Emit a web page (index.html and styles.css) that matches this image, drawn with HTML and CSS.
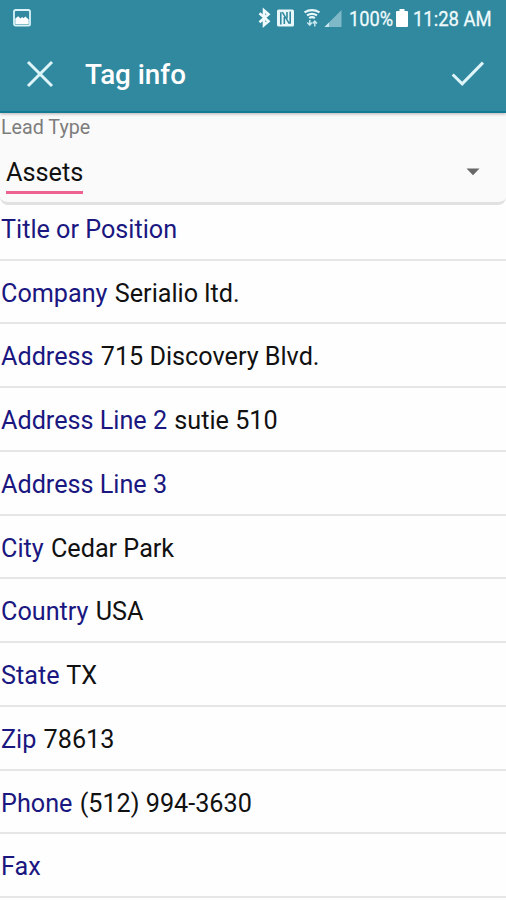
FILE: index.html
```html
<!DOCTYPE html>
<html lang="en">
<head>
<meta charset="utf-8">
<title>Tag info</title>
<link rel="stylesheet" href="styles.css">
</head>
<body>
<header class="header">
  <div class="status">
    <svg class="status-photo" width="18" height="18" viewBox="0 0 18 18"><rect x="1" y="1" width="16" height="15.5" rx="1.6" fill="none" stroke="#d9f3f8" stroke-width="1.8"/><path d="M2.3 15V9.6l2.9-2.4 2.3 2.3 1.6-1.6 1.6 1.3 1.6-1.6 3.4 3v4.4z" fill="#fff"/></svg>
    <svg class="status-icons" width="88" height="22" viewBox="0 0 88 22" fill="none">
      <path d="M1.5 6.3l9 8-4.5 3.9V3.3l4.5 3.9-9 8" stroke="#f1fbfd" stroke-width="2.6"/>
      <rect x="19" y="2.5" width="17" height="17" rx="1.6" fill="#e8f7fa"/>
      <path d="M22.8 17.5V5.2M24.3 5.2l7 11.5M26.3 17V10M32.2 4.5v12.3M29 11.5V5" stroke="#31899f" stroke-width="1.6"/>
      <path d="M46.5 5.4q7.5-4.6 15 0M49 8.4q5-3.2 10 0M51.2 11.2q2.8-2 5.6 0" stroke="#e8f7fa" stroke-width="2.2"/>
      <path d="M51.8 13v5M49.3 15.5l2.5 2.7 2-2.7M56.8 19.5v-5M54.6 16.6l2.2-2.5 2.2 2.5" stroke="#c6e8ef" stroke-width="1.5"/>
      <path d="M66.5 20L83.5 3v17z" fill="#7fb9c7"/><path d="M66.5 20l4.5-4.4V20z" fill="#c9e7ee"/>
    </svg>
    <span class="status-percent">100%</span>
    <svg class="status-battery" width="12" height="18" viewBox="0 0 12 18"><path d="M3.5 0h5v2H11q1 0 1 1V17q0 1-1 1H1q-1 0-1-1V3q0-1 1-1h2.5z" fill="#fff"/></svg>
    <span class="status-time">11:28 AM</span>
  </div>
  <div class="toolbar">
    <svg class="close" width="28" height="28" viewBox="0 0 28 28"><path d="M2 2l24 24M26 2L2 26" stroke="#dff4f8" stroke-width="3"/></svg>
    <h1 class="title">Tag info</h1>
    <svg class="check" width="34" height="28" viewBox="0 0 34 28"><path d="M1.7 14.5l9.5 9.3L32 2.6" fill="none" stroke="#dff4f8" stroke-width="3"/></svg>
  </div>
</header>
<main>
  <section class="lead">
    <div class="lead-label">Lead Type</div>
    <div class="select"><span class="select-value">Assets</span><svg class="caret" width="14" height="8" viewBox="0 0 14 8"><path d="M.5 .5h13L7 7.3z" fill="#686868"/></svg></div>
  </section>
  <ul class="fields">
    <li class="field"><span class="name">Title or Position</span></li>
    <li class="field"><span class="name">Company</span> Serialio ltd.</li>
    <li class="field"><span class="name">Address</span> 715 Discovery Blvd.</li>
    <li class="field"><span class="name">Address Line 2</span> sutie 510</li>
    <li class="field"><span class="name">Address Line 3</span></li>
    <li class="field"><span class="name">City</span> Cedar Park</li>
    <li class="field"><span class="name">Country</span> USA</li>
    <li class="field"><span class="name">State</span> TX</li>
    <li class="field"><span class="name">Zip</span> 78613</li>
    <li class="field"><span class="name">Phone</span> (512) 994-3630</li>
    <li class="field"><span class="name">Fax</span></li>
  </ul>
</main>
</body>
</html>
```
FILE: styles.css
```css
* { box-sizing: border-box; }
body { margin: 0; height: 900px; overflow: hidden; background: #fefefe; color: #111; font-family: Roboto, sans-serif; }
svg { display: block; flex: none; }
.header { position: relative; height: 113px; background: #31899f; border-bottom: 2px solid #147b95; box-shadow: 0 1px 3px #b9afb4; color: #fff; }
.status { display: flex; align-items: flex-start; height: 36px; padding-top: 7px; font-size: 20.5px; line-height: 24px; color: #effafc; -webkit-text-stroke: .3px #effafc; }
.status-photo { margin: 2px 0 0 13px; }
.status-icons { margin: 0 0 0 227px; }
.status-percent { width: 44px; margin-left: 3px; white-space: nowrap; transform: scaleX(.89); transform-origin: 0 0; }
.status-battery { margin: 2px 0 0 3px; }
.status-time { margin-left: 5px; white-space: nowrap; transform: scaleX(.9); transform-origin: 0 0; }
.toolbar { display: flex; align-items: center; height: 76px; padding: 0 21px 0 26px; }
.title { flex: 1; margin: 2px 0 0 31px; font-size: 27.8px; line-height: 32px; font-weight: 500; }
.check { margin-bottom: 1px; }
.lead { height: 92px; background: #fafafa; border-bottom: 3px solid #e1e1e1; border-radius: 0 0 8px 8px; }
.lead-label { padding: 3px 0 0 1px; font-size: 19.7px; line-height: 24px; color: #7d7d7d; }
.select { display: flex; justify-content: space-between; align-items: flex-start; padding: 16px 26px 0 6px; }
.select-value { height: 38px; border-bottom: 3px solid #ee6291; font-size: 25.3px; line-height: 34px; }
.caret { margin-top: 12px; }
.fields { margin: 0; padding: 0; list-style: none; }
.field { height: 63.75px; padding: 16px 0 0 1px; border-bottom: 2px solid #e6e6e6; font-size: 25.2px; line-height: 34px; white-space: nowrap; }
.field:first-child { height: 55.7px; padding-top: 8px; }
.name { margin-right: 1px; color: #1a1780; }
```
